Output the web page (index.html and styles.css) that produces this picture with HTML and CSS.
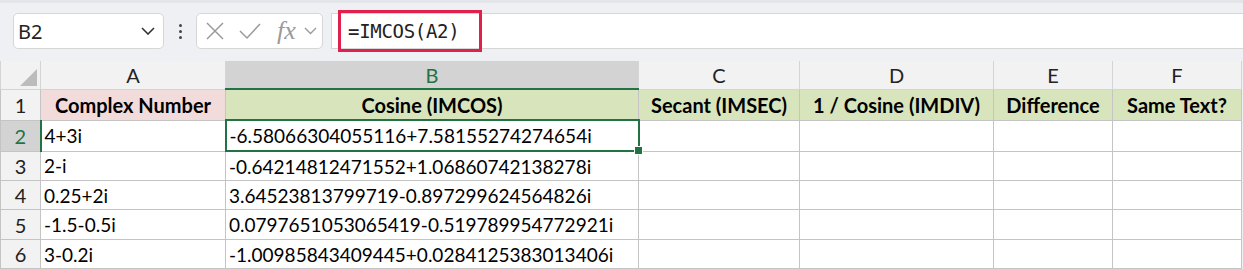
FILE: index.html
```html
<!DOCTYPE html>
<html lang="en">
<head>
    <meta charset="UTF-8">
    <title>IMCOS</title>
    <link rel="stylesheet" href="styles.css">
</head>
<body>
    <div class="toolbar">
        <div class="name-box">
            <span>B2</span>
            <svg class="chev" width="14" height="8" viewBox="0 0 14 8"><path d="M1 1l6 6 6-6" fill="none" stroke="#333" stroke-width="1.6"/></svg>
        </div>
        <div class="dots">
            <span></span><span></span><span></span>
        </div>
        <div class="fx-box">
            <svg width="20" height="20" viewBox="0 0 20 20"><path d="M2 2l16 16M18 2L2 18" stroke="#9a9a9a" stroke-width="1.5" fill="none"/></svg>
            <svg width="22" height="18" viewBox="0 0 22 18"><path d="M1 9l7 7L21 2" stroke="#9a9a9a" stroke-width="1.5" fill="none"/></svg>
            <span class="fx">fx</span>
            <svg width="13" height="8" viewBox="0 0 13 8"><path d="M1 1l5.5 5.5L12 1" fill="none" stroke="#9a9a9a" stroke-width="1.4"/></svg>
        </div>
        <div class="formula">
            <span class="formula-text">=IMCOS(A2)</span>
        </div>
    </div>

    <table class="sheet">
        <colgroup>
            <col style="width:40px">
            <col style="width:185px">
            <col style="width:413px">
            <col style="width:161px">
            <col style="width:194px">
            <col style="width:119px">
            <col style="width:129px">
        </colgroup>
        <tr class="col-head">
            <th class="corner"><span class="tri"></span></th>
            <th>A</th>
            <th class="sel">B</th>
            <th>C</th>
            <th>D</th>
            <th>E</th>
            <th>F</th>
        </tr>
        <tr class="r1">
            <th class="rh">1</th>
            <td class="pink">Complex Number</td>
            <td class="green">Cosine (IMCOS)</td>
            <td class="green">Secant (IMSEC)</td>
            <td class="green">1 / Cosine (IMDIV)</td>
            <td class="green">Difference</td>
            <td class="green">Same Text?</td>
        </tr>
        <tr class="r2">
            <th class="rh sel">2</th>
            <td>4+3i</td>
            <td class="active">-6.58066304055116+7.58155274274654i<span class="handle"></span></td>
            <td></td><td></td><td></td><td></td>
        </tr>
        <tr class="r3">
            <th class="rh">3</th>
            <td>2-i</td>
            <td>-0.64214812471552+1.06860742138278i</td>
            <td></td><td></td><td></td><td></td>
        </tr>
        <tr class="r4">
            <th class="rh">4</th>
            <td>0.25+2i</td>
            <td>3.64523813799719-0.897299624564826i</td>
            <td></td><td></td><td></td><td></td>
        </tr>
        <tr class="r5">
            <th class="rh">5</th>
            <td>-1.5-0.5i</td>
            <td>0.0797651053065419-0.519789954772921i</td>
            <td></td><td></td><td></td><td></td>
        </tr>
        <tr class="r6">
            <th class="rh">6</th>
            <td>3-0.2i</td>
            <td>-1.00985843409445+0.0284125383013406i</td>
            <td></td><td></td><td></td><td></td>
        </tr>
        <tr class="r7">
            <th class="rh"></th>
            <td></td><td></td><td></td><td></td><td></td><td></td>
        </tr>
    </table>
</body>
</html>
```

FILE: styles.css
```css
body {
    margin: 0;
    background: #eef0f3;
    font-family: Lato, 'Liberation Sans', sans-serif;
    overflow: hidden;
}
.toolbar {
    height: 61px;
    display: flex;
    align-items: flex-start;
    padding-top: 10px;
    box-sizing: border-box;
    border-top: 3px solid #e3e5e8;
}
.name-box {
    margin-left: 13px;
    width: 151px;
    height: 36px;
    box-sizing: border-box;
    background: white;
    border: 1px solid #d6d6d6;
    border-radius: 5px;
    display: flex;
    align-items: center;
    justify-content: space-between;
    padding: 0 8px 0 4px;
    font-family: 'Noto Sans', sans-serif;
    font-size: 20px;
    color: #222;
}
.dots {
    width: 32px;
    height: 36px;
    display: flex;
    flex-direction: column;
    align-items: center;
    justify-content: center;
    gap: 3px;
}
.dots span {
    width: 3px;
    height: 3px;
    background: #444;
    border-radius: 50%;
}
.fx-box {
    width: 127px;
    height: 36px;
    box-sizing: border-box;
    background: white;
    border: 1px solid #d6d6d6;
    border-radius: 5px;
    display: flex;
    align-items: center;
    gap: 14px;
    padding-left: 8px;
}
.fx-box .fx {
    font-family: 'Liberation Serif', serif;
    font-style: italic;
    font-size: 26px;
    line-height: 1;
    color: #9a9a9a;
    margin-left: 2px;
    margin-right: -6px;
}
.formula {
    flex: 1;
    margin-left: 8px;
    height: 36px;
    background: white;
    border-top: 1px solid #d6d6d6;
    border-bottom: 1px solid #d6d6d6;
    border-left: 1px solid #d6d6d6;
    box-sizing: border-box;
    position: relative;
}
.formula-text {
    position: absolute;
    left: 6px;
    top: -4px;
    width: 144px;
    height: 42px;
    box-sizing: border-box;
    border: 3px solid #e0214c;
    font-family: 'DejaVu Sans Mono', monospace;
    font-size: 19px;
    letter-spacing: -0.3px;
    color: #222;
    padding-left: 7px;
    line-height: 36px;
}
.sheet {
    border-collapse: collapse;
    table-layout: fixed;
    width: 1241px;
    background: white;
    font-size: 19px;
    color: #000;
}
.sheet th, .sheet td {
    border: 1px solid #c4c4c4;
    padding: 0 3px;
    white-space: nowrap;
    overflow: visible;
}
.col-head th {
    height: 27px;
    background: #f2f2f2;
    font-weight: normal;
    font-size: 20px;
    color: #222;
    border-top: none;
    border-color: #d4d4d4;
}
.col-head th.sel {
    background: #d3d3d3;
    color: #217346;
    border-bottom: 2px solid #217346;
}
.corner {
    position: relative;
}
.tri {
    position: absolute;
    right: 3px;
    bottom: 3px;
    width: 0;
    height: 0;
    border-left: 17px solid transparent;
    border-bottom: 17px solid #bcbcbc;
}
.rh {
    background: #f2f2f2;
    font-weight: normal;
    font-size: 20px;
    text-align: center;
    color: #222;
    border-color: #d4d4d4;
}
.rh.sel {
    background: #d3d3d3;
    color: #217346;
    border-right: 2px solid #217346;
}
.r1 td, .r1 th { height: 29px; }
.r2 td, .r2 th { height: 29px; }
.r3 td, .r3 th { height: 28px; }
.r4 td, .r4 th { height: 28px; }
.r5 td, .r5 th { height: 29px; }
.r6 td, .r6 th { height: 28px; }
.r7 td, .r7 th { height: 28px; }
.r1 td {
    font-weight: bold;
    font-size: 20px;
    text-align: center;
}
.pink {
    background: #f2dcdb;
}
.green {
    background: #d8e4bc;
}
.sheet td.active {
    border: 2px solid #217346;
    position: relative;
}
.handle {
    position: absolute;
    right: -5px;
    bottom: -5px;
    width: 7px;
    height: 7px;
    background: #217346;
    border: 1px solid white;
}
```
